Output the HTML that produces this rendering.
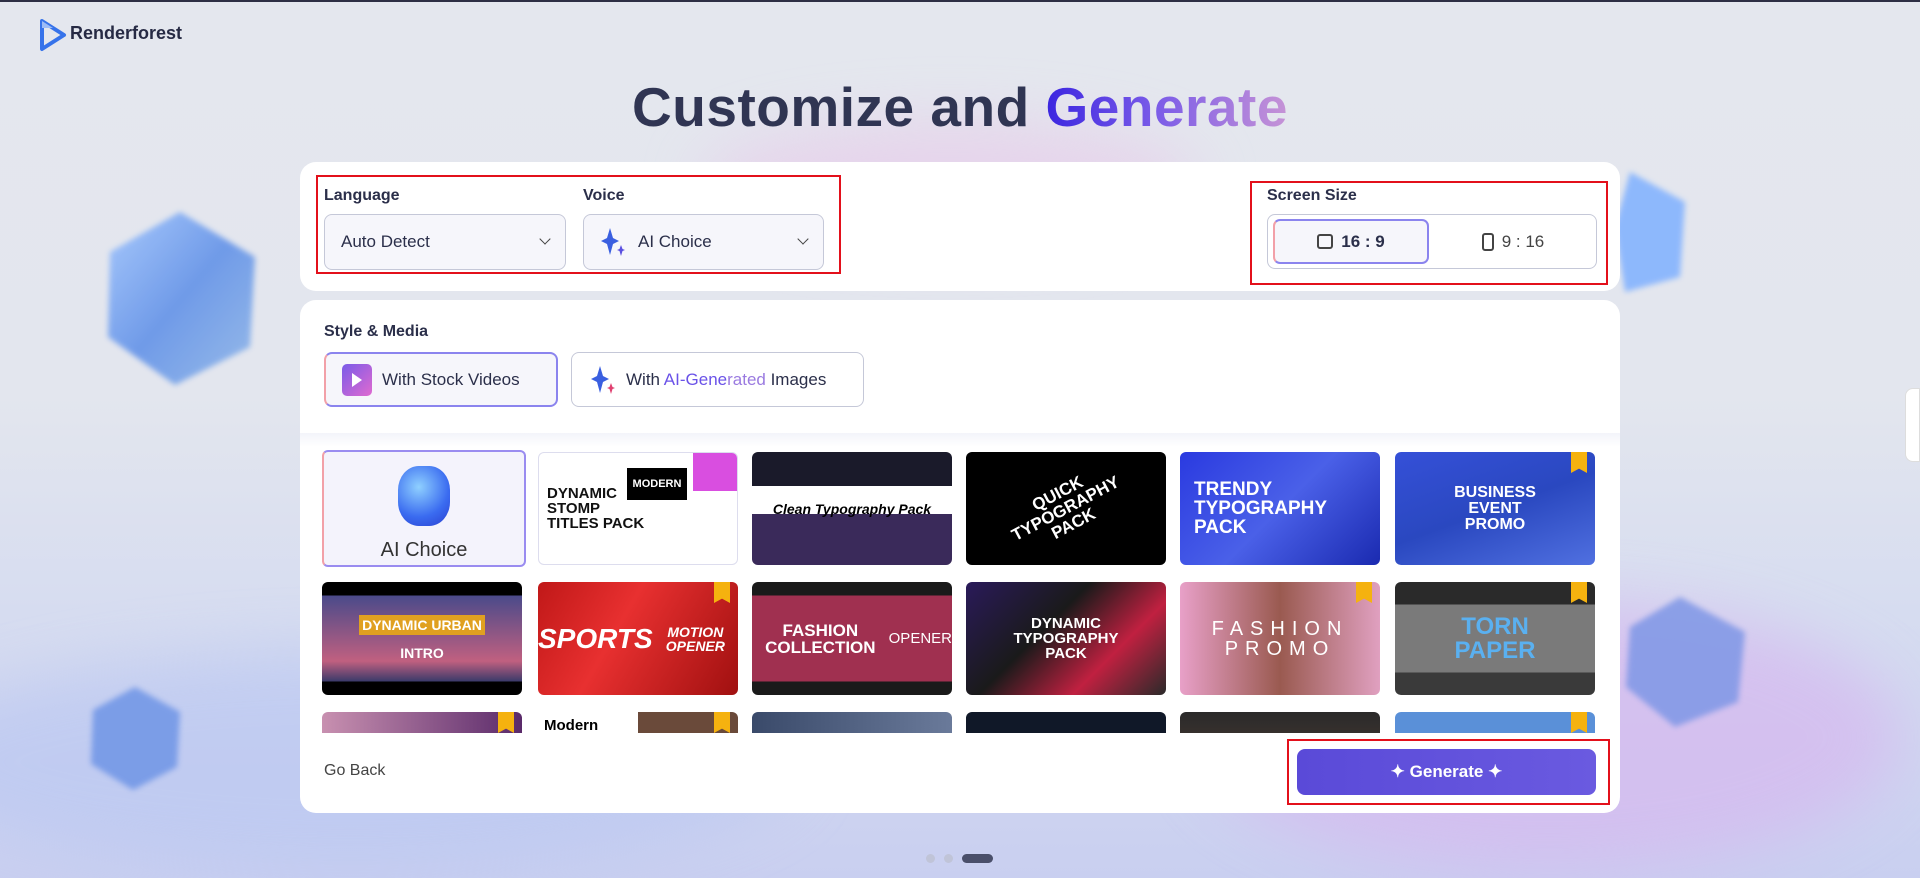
<!DOCTYPE html>
<html><head><meta charset="utf-8"><style>
*{box-sizing:border-box;margin:0;padding:0}
html,body{width:1920px;height:878px;overflow:hidden}
body{font-family:"Liberation Sans",sans-serif;color:#2b2f4a;position:relative}
#w{position:absolute;left:0;top:0;width:1920px;height:878px;overflow:hidden;
background:linear-gradient(180deg,#e4e7ee 0%,#e3e6ee 45%,#d6dcf0 70%,#c9cff0 100%);border-top:2px solid #2e2f44}
.blob{position:absolute;border-radius:50%;filter:blur(30px)}
.cube{position:absolute;filter:blur(3px);opacity:.85}
.card{position:absolute;background:#fff;border-radius:16px;left:300px;width:1320px}
.lbl{position:absolute;font-size:16px;font-weight:bold;color:#2b2f4a}
.sel{position:absolute;border:1px solid #c5c8d8;border-radius:8px;background:#f6f6fb;height:56px;display:flex;align-items:center;padding:0 16px;font-size:17px}
.chev{position:absolute;right:16px;top:20px;width:8px;height:8px;border-right:1.6px solid #444;border-bottom:1.6px solid #444;transform:rotate(45deg)}
.red{position:absolute;border:2px solid #e3101b}
.th{position:absolute;width:200px;height:113px;border-radius:6px;overflow:hidden;color:#fff;font-weight:bold;font-family:"Liberation Sans Narrow","Liberation Sans",sans-serif;display:flex;align-items:center;justify-content:center;text-align:center;line-height:1}
.crown{position:absolute;right:8px;top:-1px;width:16px;height:22px;background:#f5b20f;clip-path:polygon(0 0,100% 0,100% 100%,50% 80%,0 100%)}
</style></head><body><div id="w">
<div class="blob" style="left:-100px;top:650px;width:900px;height:220px;background:#b8c6f2;opacity:.6"></div>
<div class="blob" style="left:1200px;top:600px;width:700px;height:270px;background:#d6b8ef;opacity:.7"></div>
<div class="blob" style="left:700px;top:120px;width:500px;height:120px;background:#e8c8ea;opacity:.6"></div>
<svg class="cube" style="left:100px;top:205px" width="160" height="180"><defs><linearGradient id="g1" x1="0" y1="0" x2="1" y2="1"><stop offset="0" stop-color="#9ec4ff"/><stop offset=".5" stop-color="#5c8ee8"/><stop offset="1" stop-color="#8bb4e8"/></linearGradient></defs><polygon points="80,5 155,50 150,140 75,178 8,130 10,45" fill="url(#g1)"/></svg>
<svg class="cube" style="left:85px;top:680px" width="100" height="110"><polygon points="50,5 95,30 92,85 48,108 6,82 8,28" fill="#6f95e6"/></svg>
<svg class="cube" style="left:1610px;top:165px" width="80" height="130"><polygon points="20,5 75,35 70,110 15,125 5,60" fill="#7fb0ff"/></svg>
<svg class="cube" style="left:1620px;top:590px" width="130" height="140"><polygon points="60,5 125,40 118,110 55,135 6,95 10,35" fill="#7f97e6"/></svg>
<div style="position:absolute;left:1905px;top:386px;width:15px;height:74px;background:#fff;border-radius:8px 0 0 8px;border:1px solid #ddd"></div>

<svg style="position:absolute;left:39px;top:16px" width="28" height="34"><polygon points="3,3 25,17 3,31" fill="none" stroke="#3673ea" stroke-width="4" stroke-linejoin="round"/><polygon points="3,3 14,10 3,10" fill="#9cbcf6"/></svg>
<div style="position:absolute;left:70px;top:21px;font-size:18px;font-weight:bold;color:#262a44">Renderforest</div>

<div style="position:absolute;left:0;width:1920px;top:73px;text-align:center;font-size:55px;font-weight:bold;color:#303553;letter-spacing:.5px">Customize and <span style="background:linear-gradient(90deg,#3b25e0,#7a5be8 45%,#c693d6);-webkit-background-clip:text;color:transparent">Generate</span></div>

<div class="card" style="top:160px;height:129px">
 <div class="lbl" style="left:24px;top:25px">Language</div>
 <div class="sel" style="left:24px;top:52px;width:242px">Auto Detect<div class="chev"></div></div>
 <div class="lbl" style="left:283px;top:25px">Voice</div>
 <div class="sel" style="left:283px;top:52px;width:241px"><svg width="26" height="30" style="margin-right:12px"><path d="M10 1 L13 11 L19 14 L13 17 L10 28 L7 17 L1 14 L7 11Z" fill="#3a5fe0"/><path d="M21 18 L22.5 22 L25 23 L22.5 24 L21 29 L19.5 24 L17 23 L19.5 22Z" fill="#5a4fe0"/></svg>AI Choice<div class="chev"></div></div>
 <div class="lbl" style="left:967px;top:25px">Screen Size</div>
 <div style="position:absolute;left:967px;top:52px;width:330px;height:55px;border:1px solid #c5c8d8;border-radius:8px"></div>
 <div style="position:absolute;left:973px;top:57px;width:156px;height:45px;border-radius:7px;background:#f6f6fb;border:2px solid #8b84ee;border-left-color:#f2a0a8;display:flex;align-items:center;justify-content:center;font-size:17px;font-weight:bold;gap:8px"><span style="width:16px;height:15px;border:2px solid #444;border-radius:3px"></span>16 : 9</div>
 <div style="position:absolute;left:1135px;top:57px;width:156px;height:45px;display:flex;align-items:center;justify-content:center;font-size:17px;gap:8px;color:#444"><span style="width:12px;height:18px;border:2px solid #444;border-radius:3px"></span>9 : 16</div>
</div>
<div class="red" style="left:316px;top:173px;width:525px;height:99px"></div>
<div class="red" style="left:1250px;top:179px;width:358px;height:104px"></div>

<div class="card" style="top:298px;height:513px;overflow:hidden">
 <div class="lbl" style="left:24px;top:23px">Style &amp; Media</div>
 <div style="position:absolute;left:24px;top:52px;width:234px;height:55px;border-radius:8px;background:#f6f6fb;border:2px solid #8b84ee;border-left-color:#f2a0a8;display:flex;align-items:center;padding-left:16px;font-size:17px;gap:10px"><span style="width:30px;height:32px;border-radius:5px;background:linear-gradient(135deg,#7a5be8,#e06ad0);display:inline-flex;align-items:center;justify-content:center"><span style="width:0;height:0;border-left:10px solid #fff;border-top:7px solid transparent;border-bottom:7px solid transparent"></span></span>With Stock Videos</div>
 <div style="position:absolute;left:271px;top:52px;width:293px;height:55px;border-radius:8px;border:1px solid #c5c8d8;display:flex;align-items:center;padding-left:18px;font-size:17px;gap:10px"><svg width="26" height="30"><path d="M10 1 L13 11 L19 14 L13 17 L10 28 L7 17 L1 14 L7 11Z" fill="#3a5fe0"/><path d="M21 18 L22.5 22 L25 23 L22.5 24 L21 29 L19.5 24 L17 23 L19.5 22Z" fill="#e04070"/></svg><span>With <span style="color:#6a52e8">AI-Gene</span><span style="color:#9a7ae0">rated</span> Images</span></div>
 <div style="position:absolute;left:0;top:133px;width:1320px;height:300px;background:linear-gradient(#f3f4fa,#fff 14px);overflow:hidden">
  <div class="th" style="left:22px;top:17px;width:204px;height:117px;background:#f4f3fc;border:2px solid #9a8cf0;border-left-color:#f2a0a8;color:#333;font-family:'Liberation Sans',sans-serif;font-weight:normal;flex-direction:column;font-size:20px"><div style="width:52px;height:60px;border-radius:40%;background:radial-gradient(circle at 40% 35%,#8fd0ff,#3a6bf0 60%,#2a3fd0);margin-bottom:14px;margin-top:8px"></div>AI Choice</div>
  <div class="th" style="left:238px;top:19px;background:#fff;color:#111;font-size:15px;justify-content:flex-start;padding-left:8px;text-align:left;border:1px solid #dde">DYNAMIC<br>STOMP<br>TITLES PACK<div style="position:absolute;left:88px;top:15px;width:60px;height:32px;background:#000;color:#fff;font-size:11px;display:flex;align-items:center;justify-content:center">MODERN</div><div style="position:absolute;right:0;top:0;width:44px;height:38px;background:#d94ee0"></div></div>
  <div class="th" style="left:452px;top:19px;background:linear-gradient(#1a1a2a 0 30%,#fff 30% 55%,#3a2a5a 55%);color:#000;font-size:14px;font-style:italic">Clean Typography Pack</div>
  <div class="th" style="left:666px;top:19px;background:#000;font-size:17px"><span style="transform:rotate(-28deg);display:block">QUICK<br>TYPOGRAPHY<br>PACK</span></div>
  <div class="th" style="left:880px;top:19px;background:linear-gradient(135deg,#2a3ae0,#4a60e8 50%,#1a2ab0);font-size:19px;justify-content:flex-start;padding-left:14px;text-align:left">TRENDY<br>TYPOGRAPHY<br>PACK</div>
  <div class="th" style="left:1095px;top:19px;background:linear-gradient(160deg,#3550d8,#2a48c0 50%,#5070e0);font-size:16px">BUSINESS<br>EVENT<br>PROMO<div class="crown"></div></div>
  <div class="th" style="left:22px;top:149px;background:linear-gradient(#000 0 12%,#4a4a8a 12%,#c06080 70%,#3a3a6a 88%,#000 88%);font-size:14px"><span><span style="background:#e0a020;padding:2px 3px">DYNAMIC URBAN</span><br><br>INTRO</span></div>
  <div class="th" style="left:238px;top:149px;background:linear-gradient(120deg,#c01818,#e83030 40%,#a01010);font-size:28px;font-style:italic">SPORTS<br><span style="font-size:14px">MOTION OPENER</span><div class="crown"></div></div>
  <div class="th" style="left:452px;top:149px;background:linear-gradient(#1a1a1a 0 12%,#a03050 12% 88%,#1a1a1a 88%);font-size:17px">FASHION COLLECTION<br><span style="font-weight:normal;font-size:15px">OPENER</span></div>
  <div class="th" style="left:666px;top:149px;background:linear-gradient(135deg,#2a1a5a,#1a1a1a 40%,#c02040 70%,#2a2a2a);font-size:15px">DYNAMIC<br>TYPOGRAPHY<br>PACK</div>
  <div class="th" style="left:880px;top:149px;background:linear-gradient(90deg,#e8a0c8,#9a5a50 50%,#e0a0c0);font-size:20px;font-weight:normal;letter-spacing:7px">FASHION<br>PROMO<div class="crown"></div></div>
  <div class="th" style="left:1095px;top:149px;background:linear-gradient(#2a2a2a 0 20%,#7a7a7a 20% 80%,#3a3a3a 80%);color:#5ab0f0;font-size:24px">TORN<br>PAPER<div class="crown"></div></div>
  <div class="th" style="left:22px;top:279px;background:linear-gradient(90deg,#c890b0,#5a2a6a)"><div class="crown"></div></div>
  <div class="th" style="left:238px;top:279px;background:linear-gradient(90deg,#fff 50%,#6a4a3a 50%);color:#000;font-size:15px;align-items:flex-start;justify-content:flex-start;padding:6px"><span>Modern</span><div class="crown"></div></div>
  <div class="th" style="left:452px;top:279px;background:linear-gradient(90deg,#3a4a6a,#6a7a9a)"></div>
  <div class="th" style="left:666px;top:279px;background:#101828"></div>
  <div class="th" style="left:880px;top:279px;background:linear-gradient(#2a2a2a,#6a4a3a)"></div>
  <div class="th" style="left:1095px;top:279px;background:#5a90d8"><div class="crown"></div></div>
 </div>
 <div style="position:absolute;left:24px;top:462px;font-size:16px;color:#444">Go Back</div>
 <div style="position:absolute;left:997px;top:449px;width:299px;height:46px;border-radius:8px;background:linear-gradient(90deg,#5a4ad8,#6a5ae0);color:#fff;font-weight:bold;font-size:17px;display:flex;align-items:center;justify-content:center;gap:10px">✦ Generate ✦</div>
</div>
<div class="red" style="left:1287px;top:737px;width:323px;height:66px"></div>
<div style="position:absolute;left:926px;top:852px;width:9px;height:9px;border-radius:50%;background:#c0c4d8"></div>
<div style="position:absolute;left:944px;top:852px;width:9px;height:9px;border-radius:50%;background:#c0c4d8"></div>
<div style="position:absolute;left:962px;top:852px;width:31px;height:9px;border-radius:5px;background:#4a4f6a"></div>
</div></body></html>
